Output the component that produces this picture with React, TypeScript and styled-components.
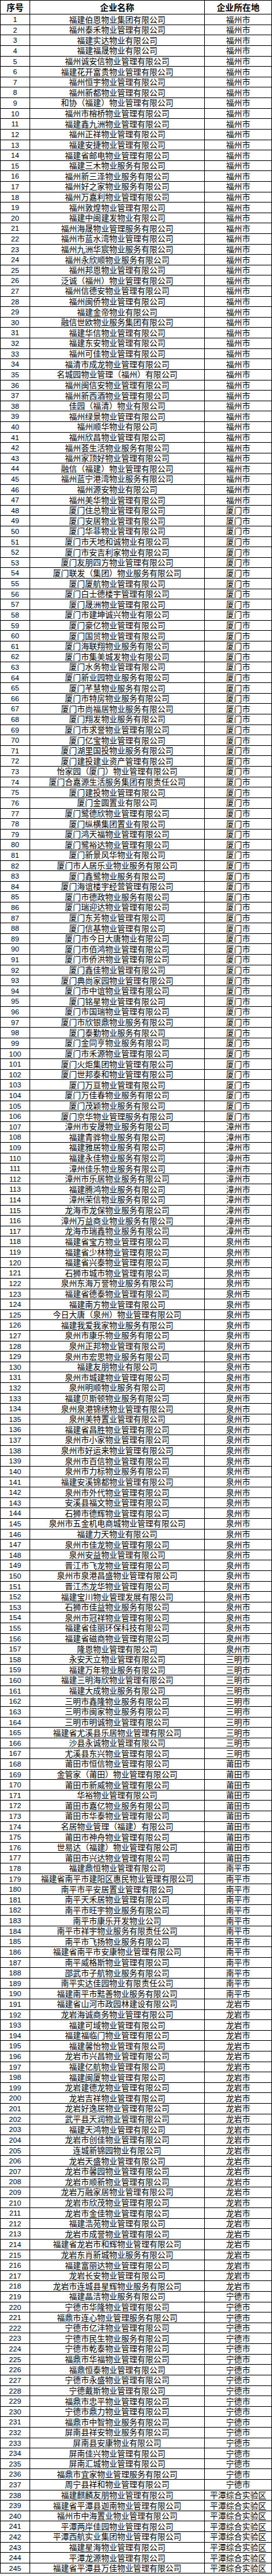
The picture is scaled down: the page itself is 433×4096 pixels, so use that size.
import React from 'react'
import styled, { createGlobalStyle } from 'styled-components'

const groups: { city: string; names: string[] }[] = [
  {
    city: '福州市',
    names: [
      '福建伯恩物业集团有限公司', '福州泰禾物业管理有限公司', '福建实达物业有限公司', '福建福晟物业有限公司',
      '福州诚安信物业管理有限公司', '福建花开富贵物业管理有限公司', '福州恒宇物业管理有限公司', '福州新都物业管理有限公司',
      '和协（福建）物业管理有限公司', '福州市榕桥物业管理有限公司', '福建鑫九洲物业管理有限公司', '福州正祥物业管理有限公司',
      '福建安捷物业管理有限公司', '福建省邮电物业管理有限公司', '福建三木物业服务有限公司', '福州新三泽物业服务有限公司',
      '福州好之家物业服务有限公司', '福州万嘉利物业管理有限公司', '福州敦煌物业管理有限公司', '福建中闽建发物业有限公司',
      '福州海晟物业管理服务有限公司', '福州市蓝水湾物业管理有限公司', '福州九洲华宸物业服务有限公司', '福州永欣顺物业服务有限公司',
      '福州邦恩物业管理有限公司', '泛诚（福州）物业管理有限公司', '福州信德安物业管理有限公司', '福州闽侨物业管理有限公司',
      '福建金帝物业有限公司', '融信世欧物业服务集团有限公司', '福建华信物业管理有限公司', '福建东安物业管理有限公司',
      '福州可佳物业管理有限公司', '福清市成龙物业管理有限公司', '名城园物业管理（福州）有限公司', '福州闽信安物业管理有限公司',
      '福州新西酒物业管理有限公司', '佳园（福清）物业有限公司', '福州绿景物业管理有限公司', '福州顺华物业有限公司',
      '福州欣昌物业管理有限公司', '福州荟生活物业服务有限公司', '福州家顶好物业管理有限公司', '融信（福建）物业管理有限公司',
      '福州蓝宁港湾物业服务有限公司', '福州源安物业有限公司', '福州美华物业管理有限公司',
    ],
  },
  {
    city: '厦门市',
    names: [
      '厦门住总物业管理有限公司', '厦门安居物业管理有限公司', '厦门华菲物业管理有限公司', '厦门市天地和诚物业有限公司',
      '厦门市安吉利家物业有限公司', '厦门友朋四方物业管理有限公司', '厦门联发（集团）物业服务有限公司', '厦门厦航物业管理有限公司',
      '厦门白士德楼宇管理有限公司', '厦门晟洲物业管理有限公司', '厦门市建坤诚兴物业有限公司', '厦门豪亿物业管理有限公司',
      '厦门国贸物业管理有限公司', '厦门海联翔物业服务有限公司', '厦门市集美城发物业有限公司', '厦门水务物业管理有限公司',
      '厦门新业园物业服务有限公司', '厦门芊慧物业服务有限公司', '厦门市特房物业服务有限公司', '厦门市尚福居物业服务有限公司',
      '厦门翔发物业服务有限公司', '厦门市求誉物业管理有限公司', '厦门亿宝物业管理有限公司', '厦门湖里国投物业服务有限公司',
      '厦门建投建业资产管理有限公司', '怡家园（厦门）物业管理有限公司', '厦门合嘉源生活服务集团有限责任公司', '厦门建投物业管理有限公司',
      '厦门金圆置业有限公司', '厦门鹭德欣物业管理有限公司', '厦门纵横集团置业有限公司', '厦门鸿天福物业管理有限公司',
      '厦门鹭裕达物业管理有限公司', '厦门新景风华物业有限公司', '厦门市人居乐业物业服务有限公司', '厦门鑫鹭物业服务有限公司',
      '厦门海谊楼宇经营管理有限公司', '厦门市德政物业服务有限公司', '厦门瑞迎达物业管理有限公司', '厦门东芳物业管理有限公司',
      '厦门信基物业管理有限公司', '厦门市今日大唐物业有限公司', '厦门市佰鸿物业管理有限公司', '厦门市侨洪物业管理有限公司',
      '厦门鑫佳物业管理有限公司', '厦门典尚家园物业管理有限公司', '厦门市中谊物业管理有限公司', '厦门铭星物业管理有限公司',
      '厦门市国瑞物业管理有限公司', '厦门市欣银鼎物业服务有限公司', '厦门泰勤物业服务有限公司', '厦门金同亨物业服务有限公司',
      '厦门市禾源物业管理有限公司', '厦门火炬集团物业管理有限公司', '厦门世邦泰和物业管理有限公司', '厦门万亘物业管理有限公司',
      '厦门万佳春物业服务有限公司', '厦门茂颖物业服务有限公司', '厦门京华物业管理服务有限公司',
    ],
  },
  {
    city: '漳州市',
    names: [
      '漳州市安晟物业服务有限公司', '福建青骅物业服务有限公司', '福建雅居物业服务有限公司', '福建永佳物业服务有限公司',
      '漳州佳乐物业服务有限公司', '漳州市乐居物业服务有限公司', '福建腾鸿物业服务有限公司', '漳州荣信物业服务有限公司',
      '龙海市龙保物业服务有限公司', '漳州万益商业物业服务有限公司', '龙海市瑞鑫物业服务有限公司',
    ],
  },
  {
    city: '泉州市',
    names: [
      '福建省宝方物业管理有限公司', '福建省少林物业管理有限公司', '福建省兴泰物业管理有限公司', '石狮市城市物业管理有限公司',
      '泉州东海万誉物业服务有限公司', '福建省德泰物业管理有限公司', '福建南方物业管理有限公司', '今日大唐（泉州）物业管理有限公司',
      '福建我爱我家物业服务有限公司', '泉州市康乐物业服务有限公司', '泉州正邦物业管理有限公司', '泉州市宏思物业服务有限公司',
      '福建友朋物业有限公司', '泉州市城建物业管理有限公司', '泉州明顺物业服务有限公司', '福建贝斯顿物业服务有限公司',
      '泉州泉港锦绣物业管理有限公司', '泉州美特置业管理有限公司', '福建省昌胜物业管理有限公司', '泉州市小家物业管理有限公司',
      '泉州市好运来物业管理有限公司', '泉州市百信物业管理有限公司', '泉州市力标物业服务有限公司', '福建安溪锦都物业管理有限公司',
      '泉州市外代物业管理有限公司', '安溪县福文物业管理有限公司', '石狮市德辉物业管理有限公司', '泉州市五金机电商城物业管理有限公司',
      '福建力天物业有限公司', '泉州市佳龙物业管理有限公司', '泉州安益物业管理有限公司', '晋江市飞龙物业管理有限公司',
      '泉州市泉港昌盛物业管理有限公司', '晋江杰龙华物业管理有限公司', '福建宝川物业管理发展有限公司', '石狮市佳益物业服务有限公司',
      '泉州市冠祥物业管理有限公司', '福建省佳丽环保科技有限公司', '福建省磁商物业管理有限公司', '隆恩物业管理有限公司',
    ],
  },
  {
    city: '三明市',
    names: [
      '永安天立物业管理有限公司', '福建万年物业服务有限公司', '福建三明海欣物业管理有限公司', '福建大成物业服务有限公司',
      '三明市鑫隆物业服务有限公司', '三明市闽家物业服务有限公司', '三明市明诚物业管理有限公司', '福建省尤溪县乐居物业管理有限公司',
      '沙县永诚物业管理有限公司', '尤溪县东兴物业管理有限公司',
    ],
  },
  {
    city: '莆田市',
    names: [
      '莆田市恒信物业管理有限公司', '金管家（莆田）物业管理有限公司', '莆田市新威物业管理有限公司', '华裕物业管理有限公司',
      '莆田市嘉亿物业服务有限公司', '莆田市华泰物业管理有限公司', '名居物业管理（福建）有限公司', '莆田市神舟物业管理有限公司',
      '世易达（福建）物业管理有限公司', '莆田市兴达物业管理有限公司',
    ],
  },
  {
    city: '南平市',
    names: [
      '福建鼎恒物业管理有限公司', '福建省南平市建阳区惠民物业管理有限公司', '南平市平安居置业管理有限公司', '南平天禾居物业管理有限公司',
      '南平市旺宇物业服务有限公司', '南平市康乐开发物业公司', '南平市祥宇物业服务有限责任公司', '南平市飞扬物业服务有限公司',
      '福建省南平市安康物业管理有限公司', '南平威格斯物业管理有限公司', '邵武市子航物业服务有限公司', '南平实达佳园物业有限责任公司',
      '福建南平市黠善物业服务有限公司',
    ],
  },
  {
    city: '龙岩市',
    names: [
      '福建省山河市政园林建设有限公司', '龙岩海诚商务物业管理有限公司', '福建可域物业管理有限公司', '福建福临门物业管理有限公司',
      '福建馨怡物业管理有限公司', '龙岩市兴昌物业管理有限公司', '福建亿航物业管理有限公司', '福建闽厦物业管理有限公司',
      '龙岩建德龙物业管理有限公司', '龙岩吉祥物业管理有限公司', '龙岩好逸居物业管理有限公司', '武平县天润物业管理有限公司',
      '福建天鸿物业管理有限公司', '龙岩市创佳物业管理有限公司', '连城新锦园物业有限公司', '龙岩天盛物业管理有限公司',
      '龙岩市馨园物业管理有限公司', '龙岩市顺新物业管理有限公司', '龙岩万融家居物业管理有限公司', '龙岩市欣茂物业管理有限公司',
      '龙岩市金佳物业管理有限公司', '福建浩苑物业管理有限公司', '龙岩市成誉物业管理有限公司', '福建省龙岩市和辉物业管理有限公司',
      '龙岩东肖新城物业服务有限公司', '福建富丽达物业管理有限公司', '龙岩长安物业管理有限公司', '龙岩市连城县星辉物业服务有限公司',
    ],
  },
  {
    city: '宁德市',
    names: [
      '福建晶洁物业服务有限公司', '宁德市华隆物业管理有限公司', '福鼎市连心物业管理服务有限公司', '宁德市亿沣物业管理有限公司',
      '宁德市民生物业服务有限公司', '宁德市乾泰物业管理有限公司', '福鼎市华福物业管理有限公司', '福鼎恒泰物业管理有限公司',
      '宁德市永盛物业管理有限公司', '宁德戴斯物业管理有限公司', '福鼎市忠平物业管理有限公司', '宁德市鼎力物业管理有限公司',
      '福鼎市中智物业服务有限公司', '屏南县祥安物业服务有限公司', '屏南县安康物业有限公司', '屏南佳兴物业管理有限公司',
      '屏南汇城物业管理有限公司', '福鼎市宜家物业管理服务有限公司', '周宁县祥和物业管理有限公司',
    ],
  },
  {
    city: '平潭综合实验区',
    names: [
      '福建麒麟友朋物业管理有限公司', '福建省平潭县迦南物业管理有限公司', '福州市中海置业物业管理有限公司', '平潭两岸佳园物业管理有限公司',
      '平潭西航实业集团物业管理有限公司', '福建星海物业管理有限公司', '平潭龙源物业管理有限公司', '福建省平潭县万佳物业管理有限公司',
    ],
  },
]

const rows = groups.flatMap((g) => g.names.map((name) => ({ name, city: g.city })))

const GlobalStyle = createGlobalStyle`
  html, body {
    margin: 0;
    padding: 0;
    background: #fff;
  }
  body {
    font-family: "Noto Sans CJK SC", "Noto Sans", sans-serif;
    color: #000;
  }
`

const Table = styled.div`
  display: grid;
  grid-template-columns: 46px 277px 106px;
  grid-template-rows: 21.2px;
  grid-auto-rows: 15.62px;
  gap: 1px;
  padding: 1px;
  width: 433px;
  box-sizing: border-box;
  background: #000;
`

const Row = styled.div`
  display: contents;
`

const Cell = styled.div<{ $head?: boolean; $num?: boolean }>`
  background: #fff;
  display: flex;
  align-items: center;
  justify-content: center;
  white-space: nowrap;
  line-height: 1;
  min-width: 0;
  font-family: ${(p) =>
    p.$num && !p.$head ? '"Liberation Sans", Arial, sans-serif' : '"Noto Sans CJK SC", "Noto Sans", sans-serif'};
  font-size: ${(p) => (p.$head ? '13.6px' : p.$num ? '11.6px' : '12.8px')};
  font-weight: ${(p) => (p.$head ? 700 : 400)};
  color: #000;
`

const App = () => {
  return (
    <>
      <GlobalStyle />
      <Table>
        <Row>
          <Cell $head>序号</Cell>
          <Cell $head>企业名称</Cell>
          <Cell $head>企业所在地</Cell>
        </Row>
        {rows.map((r, i) => (
          <Row key={i}>
            <Cell $num>{i + 1}</Cell>
            <Cell>{r.name}</Cell>
            <Cell>{r.city}</Cell>
          </Row>
        ))}
      </Table>
    </>
  )
}

export default App
